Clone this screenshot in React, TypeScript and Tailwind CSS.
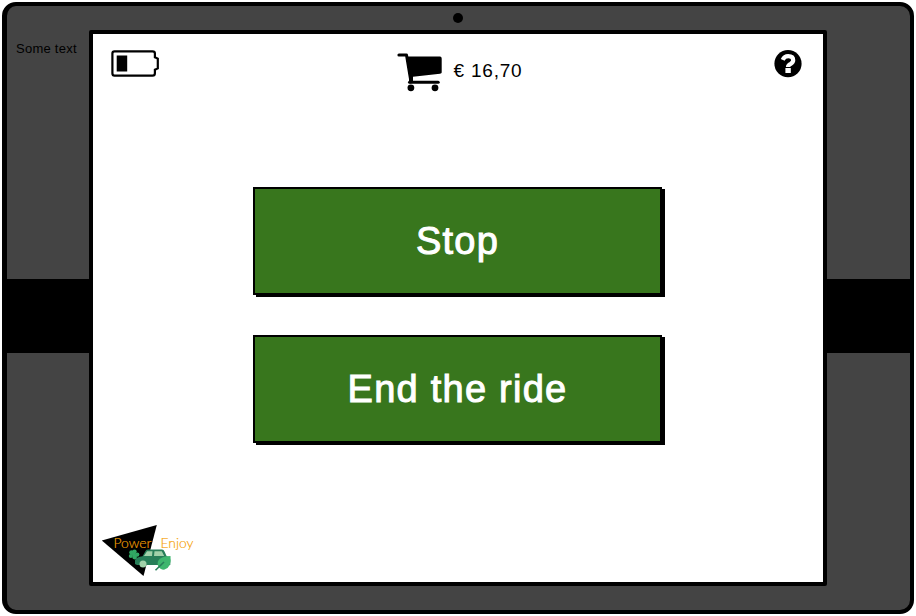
import React from "react";

function Battery() {
  return (
    <svg width="48" height="27" viewBox="0 0 48 27" fill="none">
      <path d="M3.5 1.4H41.5Q43.9 1.4 43.9 3.5V7.3L46.8 8.6V18.4L43.9 19.7V23.2Q43.9 25.6 41.5 25.6H3.5Q1.4 25.6 1.4 23.2V3.5Q1.4 1.4 3.5 1.4Z" stroke="#000" strokeWidth="2.2" />
      <rect x="5.7" y="5.5" width="10.5" height="16" fill="#000" />
    </svg>
  );
}

function Cart() {
  return (
    <svg width="46" height="40" viewBox="0 0 46 40">
      <path d="M1.9 2H9.5L13.5 26V29" fill="none" stroke="#000" strokeWidth="3" strokeLinecap="round" strokeLinejoin="round" />
      <path d="M9 3.6H43Q44.7 3.6 44.7 5.6V19.5Q44.7 20.6 43 20.8L16 23.8V28H13Z" />
      <path d="M12.5 29.3H41.2" stroke="#000" strokeWidth="3" strokeLinecap="round" />
      <circle cx="13.9" cy="34.8" r="3.4" />
      <circle cx="38" cy="34.8" r="3.4" />
    </svg>
  );
}

function Help() {
  return (
    <svg width="28" height="28" viewBox="0 0 28 28">
      <circle cx="14" cy="13.7" r="13.6" />
      <path d="M8.7 9.8Q10.4 6.2 14.2 6.2Q19.2 6.3 19.2 10.3Q19.2 12.4 16.7 13.8Q14 15.2 14 16.9" fill="none" stroke="#fff" strokeWidth="4.2" />
      <rect x="11.4" y="18" width="5.4" height="5" fill="#fff" />
    </svg>
  );
}

function Logo() {
  return (
    <svg width="94" height="54" viewBox="0 0 94 54">
      <path d="M.8 17.5L55.8 2L42.5 53Z" />
      <path d="M33 32Q35 36 37.5 37.5" fill="none" stroke="#277e58" strokeWidth="1" />
      <g fill="#31a864">
        <circle cx="30.6" cy="29.6" r="2.4" />
        <circle cx="33.5" cy="28.6" r="2.2" />
        <circle cx="36.2" cy="31.6" r="2.2" />
        <circle cx="29.8" cy="33" r="2" />
        <circle cx="33.6" cy="34" r="2.4" />
        <circle cx="33" cy="31.4" r="2" />
      </g>
      <path d="M34 41V37Q35.5 33.8 41.5 33.3L44.5 28Q45.3 26.6 47.5 26.6H61Q62.8 26.6 63.5 28.5L65.7 33.2Q69.3 34 69.3 37V42H36Z" fill="#277e58" />
      <path d="M46.1 28.2H51.5L51 33.1H42.9ZM53.5 28.2H60.8L63.2 33.1H53Z" fill="#a1d1a9" />
      <circle cx="42" cy="41" r="3.5" fill="#a1d1a9" />
      <path d="M57 43Q54.5 33.5 69.5 33Q71 45 63 46.7Q59 46.7 57 43Z" fill="#3eb66e" />
      <path d="M54.5 47.3L63 39" stroke="#277e58" strokeWidth="1.6" fill="none" />
      <g fill="#f6a000" stroke="#f6a000" strokeWidth=".15" fontFamily="Lato, 'Liberation Sans', sans-serif" fontWeight="300" fontSize="13.5">
        <text x="12.5" y="25" textLength="38" lengthAdjust="spacingAndGlyphs">Power</text>
        <text x="59.5" y="25" textLength="33" lengthAdjust="spacingAndGlyphs">Enjoy</text>
      </g>
    </svg>
  );
}

function RideButton({ label }: { label: string }) {
  return (
    <button className="flex h-[108px] w-[409px] items-center justify-center border-2 border-black bg-[#38761d] text-[38px] leading-none tracking-[1.25px] text-white shadow-[3px_2px_0_#000] [-webkit-text-stroke:1px_white]">
      {label}
    </button>
  );
}

export default function App() {
  return (
    <div className="h-[616px] w-[916px] overflow-hidden bg-white pl-0.5 pt-0.5 font-['Liberation_Sans',sans-serif] text-black">
      <div className="flex h-[612px] w-[912px] flex-col overflow-hidden rounded-[14px] border-4 border-l-5 border-black bg-[#444]">
        <div className="flex h-6 shrink-0 justify-center pt-[7px]">
          <div className="mr-px size-2.5 rounded-full bg-black" />
        </div>
        <div className="flex h-[556px] shrink-0">
          <aside className="flex w-[82px] shrink-0 flex-col">
            <div className="h-[249px] pl-[9px] pt-[11px] text-[13px] leading-[15px] tracking-[0.25px]">
              <span className="whitespace-nowrap">Some text</span>
            </div>
            <div className="h-[74px] bg-black" />
          </aside>
          <main className="flex w-[738px] shrink-0 flex-col rounded-[2px] border-4 border-black bg-white">
            <header className="grid h-[153px] grid-cols-3 items-start pl-[18px] pr-[21px] pt-4">
              <Battery />
              <div className="ml-[7px] flex items-start justify-center gap-2.5 pt-[3px]">
                <Cart />
                <span className="mt-[7px] whitespace-nowrap text-[19px] leading-[22px] tracking-[0.8px]">€ 16,70</span>
              </div>
              <div className="flex justify-end">
                <Help />
              </div>
            </header>
            <div className="flex flex-col gap-10 pl-[160px]">
              <RideButton label="Stop" />
              <RideButton label="End the ride" />
            </div>
            <footer className="mt-[80px] pl-2">
              <Logo />
            </footer>
          </main>
          <aside className="flex flex-1 flex-col pt-[249px]">
            <div className="h-[74px] bg-black" />
          </aside>
        </div>
      </div>
    </div>
  );
}
